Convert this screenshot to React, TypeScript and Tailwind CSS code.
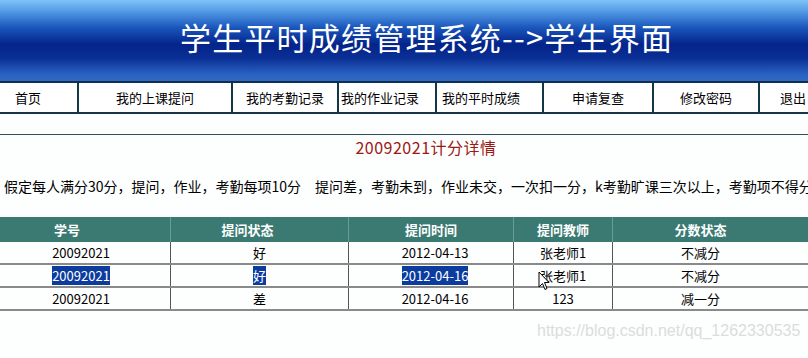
import React from "react";

const navItems = [
  { label: "首页", w: "w-[79px]", align: "justify-start pl-[15px]" },
  { label: "我的上课提问", w: "w-[154px]", align: "justify-center" },
  { label: "我的考勤记录", w: "w-[106px]", align: "justify-center" },
  { label: "我的作业记录", w: "w-[98px]", align: "justify-start pl-[2px]" },
  { label: "我的平时成绩", w: "w-[107px]", align: "justify-start pl-[5px]" },
  { label: "申请复查", w: "w-[110px]", align: "justify-center" },
  { label: "修改密码", w: "w-[106px]", align: "justify-center" },
  { label: "退出", w: "w-[60px]", align: "justify-start pl-[20px]" },
];

const rows = [
  { id: "20092021", state: "好", time: "2012-04-13", teacher: "张老师1", score: "不减分", sel: false },
  { id: "20092021", state: "好", time: "2012-04-16", teacher: "张老师1", score: "不减分", sel: true },
  { id: "20092021", state: "差", time: "2012-04-16", teacher: "123", score: "减一分", sel: false },
];

const cols = ["w-[171px]", "w-[178px]", "w-[165px]", "w-[99px]", "flex-1"];

const Sel = ({ on, children }: { on: boolean; children: React.ReactNode }) =>
  on ? <span className="bg-[#0b3c9e] text-white">{children}</span> : <>{children}</>;

export default function App() {
  return (
    <div className="relative w-[808px] h-[358px] overflow-hidden bg-[#fdfefe] font-['Noto_Sans_CJK_SC',sans-serif] text-black">
      {/* banner */}
      <div className="h-[83px] bg-[linear-gradient(to_bottom,#80c4f7_0%,#529ae4_14%,#1a56bc_34%,#04248a_55%,#0a2f94_72%,#2a62c4_92%,#3468c0_100%)] flex items-center pl-[180px] border-b-2 border-[#0b2f55]">
        <h1 className="text-white text-[31px] leading-none tracking-[1.2px] pb-[8px]">学生平时成绩管理系统--&gt;学生界面</h1>
      </div>

      {/* nav */}
      <div className="flex h-[31px] border-b-2 border-[#15364a] bg-white">
        {navItems.map((n, i) => (
          <div
            key={n.label}
            className={`${n.w} flex items-center ${n.align} text-[13px] shrink-0 ${i < navItems.length - 1 ? "border-r-2 border-[#123848]" : ""}`}
          >
            {n.label}
          </div>
        ))}
      </div>

      <div className="h-[20px]" />
      <div className="border-t border-[#2e4e5c]" />

      <div className="flex justify-center pl-[44px] text-[16px] tracking-[0.5px] text-[#9c1a14]">20092021计分详情</div>

      <p className="pl-[4px] pt-[20px] whitespace-nowrap text-[14px] leading-none">
        假定每人满分30分，提问，作业，考勤每项10分　提问差，考勤未到，作业未交，一次扣一分，k考勤旷课三次以上，考勤项不得分
      </p>

      {/* table */}
      <div className="mt-[24px] text-[13px]">
        <div className="flex h-[25px] bg-[#3a7a72] text-white font-bold">
          {["学号", "提问状态", "提问时间", "提问教师", "分数状态"].map((h, i) => (
            <div key={h} className={`${cols[i]} shrink-0 flex items-center justify-center ${i < 4 ? "border-r border-[#6a9c96]" : ""} ${i === 0 ? "pr-[36px]" : i === 1 ? "pr-[24px]" : i === 4 ? "pr-[20px]" : ""}`}>
              {h}
            </div>
          ))}
        </div>
        {rows.map((r, ri) => (
          <div key={ri} className="flex h-[23px] border-b-2 border-[#8a8a8a]">
            <div className={`${cols[0]} shrink-0 flex items-center justify-center pr-[8px] border-r border-[#555]`}><Sel on={r.sel}>{r.id}</Sel></div>
            <div className={`${cols[1]} shrink-0 flex items-center justify-center border-r border-[#555]`}><Sel on={r.sel}>{r.state}</Sel></div>
            <div className={`${cols[2]} shrink-0 flex items-center justify-center pl-[8px] border-r border-[#555]`}><Sel on={r.sel}>{r.time}</Sel></div>
            <div className={`${cols[3]} shrink-0 flex items-center justify-center border-r border-[#555]`}>{r.teacher}</div>
            <div className={`${cols[4]} flex items-center justify-center pr-[20px]`}>{r.score}</div>
          </div>
        ))}
      </div>

      {/* watermark */}
      <div className="absolute left-[537px] top-[319px] text-[16px] text-[#dcdcdc] font-['Liberation_Sans',sans-serif]">
        https://blog.csdn.net/qq_1262330535
      </div>

      {/* cursor */}
      <svg className="absolute left-[538px] top-[271px]" width="12" height="20" viewBox="0 0 12 20">
        <path d="M1 1 L1 16 L4.5 12.5 L7 18.5 L9 17.5 L6.5 11.5 L11 11.5 Z" fill="#fff" stroke="#000" strokeWidth="1" />
      </svg>
    </div>
  );
}
